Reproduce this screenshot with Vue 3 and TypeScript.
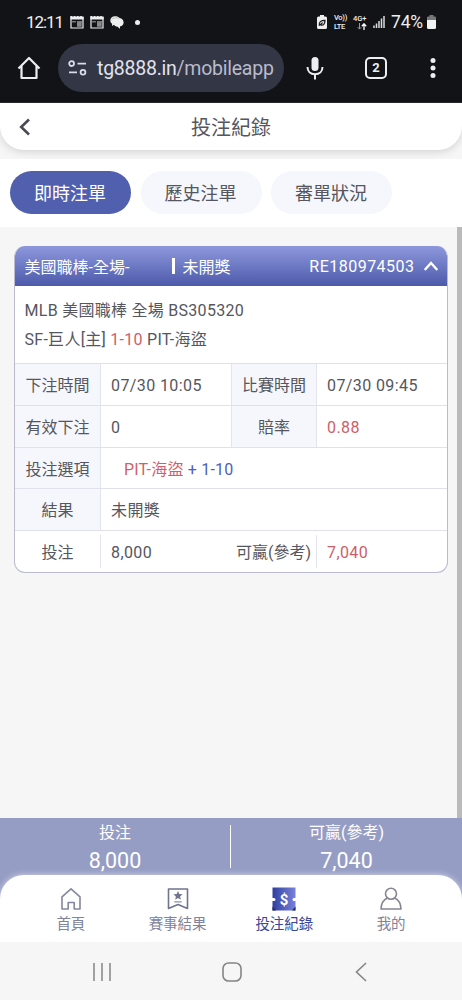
<script setup lang="ts">
import { ref } from 'vue'

interface Tab {
  id: string
  label: string
}

interface NavItem {
  id: string
  label: string
}

const tabs: Tab[] = [
  { id: 'live', label: '即時注單' },
  { id: 'history', label: '歷史注單' },
  { id: 'review', label: '審單狀況' },
]

const navItems: NavItem[] = [
  { id: 'home', label: '首頁' },
  { id: 'results', label: '賽事結果' },
  { id: 'bets', label: '投注紀錄' },
  { id: 'me', label: '我的' },
]

const activeTab = ref('live')
const activeNav = ref('bets')
const expanded = ref(true)
</script>

<template>
  <div class="phone">
    <div class="chrome">
      <div class="status">
        <span class="clock">12:11</span>
        <svg v-for="n in 2" :key="n" class="cal" viewBox="0 0 14 13">
          <path d="M1 1h12v11H1z" fill="none" stroke="#eee" stroke-width="1.2" />
          <path d="M.4 0h1.800v1h1.600V0h1.600v1H7V0h1.600v1h1.600V0h1.600v1h1.800v2.400H.4z" fill="#eee" />
          <path d="M7 6.200h4.700v4.600H7z" fill="#888" />
          <path d="M2 5.800h4M7 5.800h5" stroke="#ccc" stroke-width=".8" />
        </svg>
        <svg class="chat" viewBox="0 0 14 13">
          <path d="M5 .3C2.200.3.3 2 .3 4.300c0 1.700.9 2.800 1.800 3.500L2 10l2-1.200C5 10.400 6.500 10.800 8 10.800c.5 1 1 1.500 2 1.900v-2.300c2-.5 3.600-1.800 3.600-4C13.600 4 12 2.500 9.600 2.100 8.700.9 7 .3 5 .3z" fill="#eee" />
          <path d="M1.600 3.600C3 1.800 5 1.400 9.200 2.200" stroke="#999" stroke-width=".6" fill="none" />
        </svg>
        <span class="dot"></span>
        <span class="spacer"></span>
        <svg class="saver" viewBox="0 0 10 14">
          <path d="M3 0h4v1.500h1.500Q10 1.500 10 3v9.500Q10 14 8.500 14h-7Q0 14 0 12.500V3q0-1.500 1.500-1.500H3z" fill="#eee" />
          <path d="M2.300 10.800C1.500 7 4 5.300 8 5.300c0 3.800-1.600 5.400-4.500 4.600M3 10l2.600-2.400" fill="none" stroke="#15161a" stroke-width="1.2" />
        </svg>
        <span class="mini volte"><span>Vo))</span><span>LTE</span></span>
        <span class="mini data">
          <span>4G+</span>
          <svg viewBox="0 0 10 7">
            <path d="M2.500 0v6M.7 4.200l1.800 1.900 1.800-1.900" stroke="#999" fill="none" />
            <path d="M7 7V1M4.800 3.200L7 .8l2.200 2.400" stroke="#fff" stroke-width="1.3" fill="none" />
          </svg>
        </span>
        <svg class="signal" viewBox="0 0 12 12">
          <path d="M1 12V9.500M3.500 12V7.500M6 12V5M8.500 12V2.500M11 12V0" stroke="#ddd" stroke-width="1.5" />
        </svg>
        <span class="battery-text">74%</span>
        <svg class="battery" viewBox="0 0 9 14">
          <path d="M2.500 0h4v1.500H8Q9 1.500 9 2.500V5H0V2.500q0-1 1-1h1.500z" fill="#777" />
          <path d="M0 5h9v7.500Q9 14 7.500 14h-6Q0 14 0 12.500z" fill="#f2f2f2" />
        </svg>
      </div>
      <div class="toolbar">
        <svg class="home-icon" viewBox="0 0 24 24">
          <path d="M1.500 12.500L12 2l10.500 10.500M4.500 10v12h15V10" fill="none" stroke="#eceef4" stroke-width="2.2" stroke-linejoin="round" />
        </svg>
        <div class="url">
          <svg viewBox="0 0 19 16">
            <g fill="none" stroke="#d8dbe8" stroke-width="1.8">
              <circle cx="3.6" cy="3.6" r="2.4" />
              <path d="M9.500 3.600H18M1 12.300h8" />
              <circle cx="15" cy="12.3" r="2.4" />
            </g>
          </svg>
          <span class="address">tg8888.in<i>/mobileapp</i></span>
        </div>
        <svg class="mic" viewBox="0 0 18 24">
          <rect x="5.5" y="1" width="7" height="14" rx="3.5" fill="#eceef4" />
          <path d="M1.500 11c0 4.500 3 7.200 7.500 7.200s7.500-2.700 7.500-7.200M9 18v5.500" fill="none" stroke="#eceef4" stroke-width="2" />
        </svg>
        <span class="tab-count">2</span>
        <svg class="kebab" viewBox="0 0 6 20" fill="#eceef4">
          <circle cx="3" cy="2.5" r="2.5" /><circle cx="3" cy="10" r="2.5" /><circle cx="3" cy="17.5" r="2.5" />
        </svg>
      </div>
    </div>

    <header class="title-bar">
      <svg class="back" viewBox="0 0 12 18"><path d="M10 1.500L2.200 9l7.800 7.500" fill="none" stroke="#4a4a55" stroke-width="2.6" /></svg>
      <h1>投注紀錄</h1>
    </header>

    <nav class="tabs">
      <button v-for="t in tabs" :key="t.id" :class="{ active: t.id === activeTab }" @click="activeTab = t.id">
        {{ t.label }}
      </button>
    </nav>

    <main class="content">
      <section class="card">
        <div class="card-head" @click="expanded = !expanded">
          <span class="league">美國職棒-全場-</span>
          <span class="bar"></span>
          <span>未開獎</span>
          <span class="ticket">RE180974503</span>
          <svg viewBox="0 0 14 10"><path d="M.7 9L7 2l6.300 7" fill="none" stroke="#fff" stroke-width="2.3" /></svg>
        </div>
        <template v-if="expanded">
          <div class="match">
            <div>MLB 美國職棒 全場 BS305320</div>
            <div>SF-巨人[主] <span class="red">1-10</span> PIT-海盜</div>
          </div>
          <div class="row">
            <span class="key">下注時間</span><span class="val">07/30 10:05</span>
            <span class="key second">比賽時間</span><span class="val">07/30 09:45</span>
          </div>
          <div class="row">
            <span class="key">有效下注</span><span class="val">0</span>
            <span class="key second">賠率</span><span class="val red">0.88</span>
          </div>
          <div class="row wide">
            <span class="key">投注選項</span>
            <span class="val pick"><span class="red">PIT-海盜</span> <span class="blue">+ 1-10</span></span>
          </div>
          <div class="row wide">
            <span class="key">結果</span><span class="val">未開獎</span>
          </div>
          <div class="row total">
            <span class="key">投注</span><span class="val">8,000</span>
            <span class="key">可贏(參考)</span><span class="val red">7,040</span>
          </div>
        </template>
      </section>
      <div class="scrollbar"></div>
    </main>

    <footer class="summary">
      <div><span>投注</span><b>8,000</b></div>
      <div><span>可贏(參考)</span><b>7,040</b></div>
    </footer>

    <div class="nav-wrap">
      <nav class="bottom-nav">
        <a v-for="n in navItems" :key="n.id" :class="{ active: n.id === activeNav }" @click="activeNav = n.id">
          <svg v-if="n.id === 'home'" viewBox="0 0 24 24" fill="none" stroke="#85889e" stroke-width="1.6" stroke-linejoin="round">
            <path d="M3 9.800L12 1.800l9 8V22h-5.800v-6.500H9.200V22H3z" />
          </svg>
          <svg v-else-if="n.id === 'results'" viewBox="0 0 24 24" fill="none" stroke="#70748f" stroke-width="1.6" stroke-linejoin="round">
            <path d="M2.500 2h19v19.500L12 17.500l-9.500 4z" />
            <path d="M12 4l1.300 3 3.300.3-2.500 2.200.7 3.200-2.800-1.700-2.800 1.700.7-3.200-2.500-2.200 3.300-.3z" fill="#70748f" stroke="none" />
            <path d="M8.300 14.900h7.400" stroke-width="1" />
          </svg>
          <svg v-else-if="n.id === 'bets'" viewBox="0 0 24 24">
            <defs>
              <linearGradient id="ticketFill" x1="0" y1="0" x2="1" y2="0">
                <stop offset="0" stop-color="#3040a0" /><stop offset="1" stop-color="#7982db" />
              </linearGradient>
            </defs>
            <path d="M.5.500h23v10.500h-1.500a1.500 1.500 0 000 3h1.500v9.500H.5V14H2a1.500 1.500 0 000-3H.5z" fill="url(#ticketFill)" />
            <path d="M.5 19.500l3.500 4H.5zM23.500 19.500l-3.500 4h3.500z" fill="#252b50" />
            <text x="12" y="17.5" text-anchor="middle" fill="#fff" font-size="15" font-weight="700">$</text>
          </svg>
          <svg v-else viewBox="0 0 24 24" fill="none" stroke="#858690" stroke-width="1.6" stroke-linejoin="round">
            <circle cx="12" cy="6.8" r="5.5" />
            <path d="M8.500 11C4.500 12.700 2.200 17 2 22h20c-.2-5-2.500-9.300-6.500-11" />
          </svg>
          <span>{{ n.label }}</span>
        </a>
      </nav>
    </div>

    <div class="system-bar">
      <svg viewBox="0 0 20 20"><path d="M2 1v18M10 1v18M18 1v18" stroke="#858585" stroke-width="1.5" /></svg>
      <svg viewBox="0 0 20 20"><rect x="1" y="1" width="18" height="18" rx="5.5" fill="none" stroke="#858585" stroke-width="1.6" /></svg>
      <svg viewBox="0 0 20 20"><path d="M15 1L5.500 10l9.500 9" fill="none" stroke="#858585" stroke-width="1.6" /></svg>
    </div>
  </div>
</template>

<style>
body {
  margin: 0;
  background: #f5f5f5;
}
</style>

<style scoped>
.phone {
  width: 462px;
  height: 1000px;
  overflow: hidden;
  display: flex;
  flex-direction: column;
  background: #f6f6f7;
  color: #55565e;
  font-family: Roboto, 'Noto Sans CJK TC', sans-serif;
  font-size: 16px;
}
svg {
  display: block;
  flex: none;
}
.chrome {
  flex: none;
  height: 103px;
  box-sizing: border-box;
  background: #121317;
  border-bottom: 1px solid #29292d;
  color: #eee;
}
.status {
  display: flex;
  align-items: center;
  height: 44px;
  padding: 0 26px;
}
.clock {
  width: 44px;
  font-size: 17px;
  letter-spacing: -1.1px;
}
.cal {
  width: 14px;
  height: 13px;
  margin-right: 6px;
}
.chat {
  width: 14px;
  height: 13px;
}
.dot {
  width: 5px;
  height: 5px;
  margin-left: 11px;
  border-radius: 50%;
  background: #eee;
}
.spacer {
  flex: 1;
}
.saver {
  width: 10px;
  height: 14px;
  margin-right: 7px;
}
.mini {
  display: flex;
  flex-direction: column;
  font-size: 7.5px;
  line-height: 9px;
  font-weight: 500;
  letter-spacing: -0.3px;
}
.volte {
  width: 19px;
}
.data {
  width: 17px;
  letter-spacing: -0.1px;
}
.data svg {
  width: 10px;
  height: 7px;
  margin: 0 auto 1px;
}
.signal {
  width: 12px;
  height: 12px;
  margin-left: 3px;
}
.battery-text {
  margin-left: 6px;
  width: 36px;
  font-size: 17.5px;
  letter-spacing: -0.2px;
}
.battery {
  width: 9px;
  height: 14px;
}
.toolbar {
  display: flex;
  align-items: center;
  height: 48px;
  padding-left: 17px;
}
.home-icon {
  width: 24px;
  height: 24px;
}
.url {
  display: flex;
  align-items: center;
  box-sizing: border-box;
  width: 226px;
  height: 48px;
  margin-left: 17px;
  padding-left: 10px;
  border-radius: 24px;
  background: #333644;
}
.url svg {
  width: 19px;
  height: 16px;
  margin-right: 10px;
}
.address {
  font-size: 19.5px;
  letter-spacing: -0.25px;
  white-space: nowrap;
  color: #e1e3ee;
}
.address i {
  font-style: normal;
  color: #b9bccb;
}
.mic {
  width: 18px;
  height: 24px;
  margin-left: 22px;
}
.tab-count {
  box-sizing: border-box;
  width: 22px;
  height: 22px;
  margin-left: 41px;
  border: 2px solid #eceef4;
  border-radius: 5px;
  font-size: 13px;
  line-height: 18px;
  font-weight: 700;
  text-align: center;
}
.kebab {
  width: 6px;
  height: 20px;
  margin-left: 43px;
}
.title-bar {
  flex: none;
  display: flex;
  align-items: center;
  height: 47px;
  background: #fff;
  border-radius: 0 0 24px 24px;
  box-shadow: 0 2px 8px rgba(0, 0, 0, 0.14);
}
.back {
  width: 12px;
  height: 18px;
  margin-left: 19px;
}
h1 {
  flex: 1;
  margin: 3px 31px 0 0;
  font-size: 20px;
  font-weight: 400;
  line-height: 47px;
  text-align: center;
}
.tabs {
  flex: none;
  position: relative;
  display: flex;
  gap: 9.5px;
  height: 43px;
  margin-top: 9px;
  padding: 12px 10px 13px;
  background: #fff;
}
.tabs button {
  width: 121px;
  height: 43px;
  padding: 0 1px 1px 0;
  border: 0;
  border-radius: 22px;
  background: #f6f7fc;
  color: #55565e;
  font: inherit;
  font-size: 18px;
}
.tabs button.active {
  background: #5160ae;
  color: #fff;
}
.content {
  flex: 1;
  display: flex;
  justify-content: space-between;
  align-items: flex-start;
  padding-left: 14px;
}
.scrollbar {
  align-self: stretch;
  width: 5px;
  background: #bababa;
}
.card {
  box-sizing: border-box;
  width: 434px;
  margin-top: 19px;
  overflow: hidden;
  border: 1px solid #babbd0;
  border-top: 0;
  border-radius: 11px;
  background: #fff;
}
.card-head {
  display: flex;
  align-items: center;
  height: 40px;
  padding: 0 9.5px;
  background: linear-gradient(#8d98dc, #4d5aaa);
  color: #fff;
}
.league {
  width: 147px;
}
.bar {
  width: 3px;
  height: 16px;
  margin-right: 8px;
  background: #fff;
}
.ticket {
  margin-left: auto;
  margin-right: 9px;
  padding-top: 1px;
  letter-spacing: 0.48px;
}
.card-head svg {
  width: 14px;
  height: 10px;
}
.match {
  height: 60px;
  padding: 11px 9.5px 6px;
  line-height: 28.5px;
  letter-spacing: 0.28px;
}
.row {
  display: grid;
  grid-template-columns: 86px 130px 86px 1fr;
  grid-template-rows: 100%;
  height: 41.8px;
  box-sizing: border-box;
  border-top: 1px solid #e0e1eb;
  line-height: 43px;
}
.row.wide {
  grid-template-columns: 86px 1fr;
}
.key {
  box-sizing: border-box;
  border-right: 1px solid #e3e4ee;
  background: #f6f7fc;
  text-align: center;
}
.key.second {
  border-left: 1px solid #e3e4ee;
}
.val {
  padding-left: 10px;
  letter-spacing: 0.4px;
}
.pick {
  padding-left: 23px;
  letter-spacing: 0.2px;
}
.total {
  padding: 4px 0;
  line-height: 35px;
}
.total .key {
  background: none;
  white-space: nowrap;
}
.red {
  color: #ce5e69;
}
.blue {
  color: #4e60bc;
}
.summary {
  flex: none;
  display: flex;
  box-sizing: border-box;
  height: 57px;
  padding: 7px 0 0;
  background: #969dc5;
  color: #fff;
}
.summary div {
  box-sizing: border-box;
  width: 230px;
  height: 43px;
  display: flex;
  flex-direction: column;
  align-items: center;
}
.summary div + div {
  width: 232px;
  border-left: 1px solid #fff;
}
.summary span {
  line-height: 15px;
}
.summary b {
  margin-top: 7px;
  font-size: 21.5px;
  font-weight: 400;
  line-height: 28px;
}
.nav-wrap {
  flex: none;
  background: linear-gradient(#969dc5 28px, #fff 28px);
}
.bottom-nav {
  display: flex;
  box-sizing: border-box;
  height: 67px;
  padding: 12px 17.5px 0;
  background: #fff;
  border-radius: 24px 24px 0 0;
  box-shadow: 0 0 6px rgba(255, 255, 255, 0.6);
}
.bottom-nav a {
  flex: 1;
  display: flex;
  flex-direction: column;
  align-items: center;
  color: #80839a;
  font-size: 14.5px;
}
.bottom-nav a svg {
  width: 24px;
  height: 24px;
}
.bottom-nav a span {
  line-height: 28px;
}
.bottom-nav a.active {
  color: #39469b;
}
.system-bar {
  flex: none;
  display: flex;
  align-items: center;
  justify-content: space-between;
  box-sizing: border-box;
  height: 58px;
  padding: 2px 91px 0 92px;
  background: #f6f6f6;
}
.system-bar svg {
  width: 20px;
  height: 20px;
}
</style>
